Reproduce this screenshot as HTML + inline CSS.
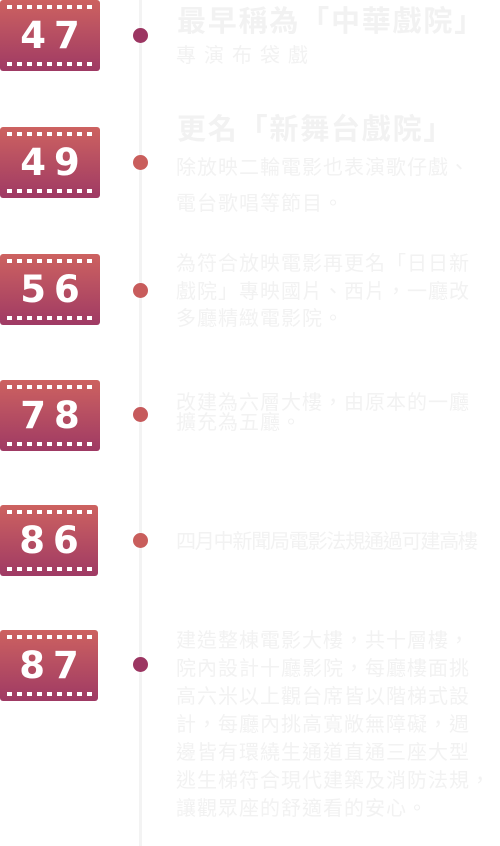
<!DOCTYPE html>
<html><head><meta charset="utf-8"><style>
*{margin:0;padding:0;box-sizing:border-box}
body{width:500px;height:846px;background:#fff;position:relative;overflow:hidden;font-family:"Liberation Sans","Noto Sans CJK TC",sans-serif;color:#f2f2f2}
.line{position:absolute;left:139px;top:0;width:3px;height:846px;background:#f3f3f3}
.b{position:absolute;left:0;width:100px;height:71px;border-radius:3px;background:linear-gradient(#cd6260,#9f3a64);color:#fff;font:bold 37px "DejaVu Sans","Liberation Sans",sans-serif;letter-spacing:8px;text-align:center;line-height:71px;padding-left:8px}
.p{position:absolute;left:7px;width:88px;height:4px;background:repeating-linear-gradient(90deg,#fff 0 5px,transparent 5px 10px)}
.p.t{top:5px}.p.bt{bottom:5px}
.d{position:absolute;left:133px;width:15px;height:15px;border-radius:50%}
.t1{position:absolute;left:177px;font-size:29px;letter-spacing:1.8px;font-weight:bold;white-space:nowrap}
.tx{position:absolute;left:176px;font-size:20px;letter-spacing:1px;line-height:28px;width:300px}
</style></head><body>
<div class="line"></div>
<div class="b" style="top:0"><div class="p t"></div>47<div class="p bt"></div></div>
<div class="b" style="top:127px"><div class="p t"></div>49<div class="p bt"></div></div>
<div class="b" style="top:254px"><div class="p t"></div>56<div class="p bt"></div></div>
<div class="b" style="top:380px"><div class="p t"></div>78<div class="p bt"></div></div>
<div class="b" style="top:505px;width:98px"><div class="p t"></div>86<div class="p bt"></div></div>
<div class="b" style="top:630px;width:98px"><div class="p t"></div>87<div class="p bt"></div></div>
<div class="d" style="top:28px;background:#9c3662"></div>
<div class="d" style="top:155px;background:#c95e5c"></div>
<div class="d" style="top:283px;background:#c85c5c"></div>
<div class="d" style="top:407px;background:#c65a5c"></div>
<div class="d" style="top:533px;background:#c95e5c"></div>
<div class="d" style="top:657px;background:#9c3662"></div>
<div class="t1" style="top:-2px">最早稱為「中華戲院」</div>
<div class="tx" style="top:42px;letter-spacing:8px">專演布袋戲</div>
<div class="t1" style="top:106px">更名「新舞台戲院」</div>
<div class="tx" style="top:150px;line-height:36px">除放映二輪電影也表演歌仔戲、<br>電台歌唱等節目。</div>
<div class="tx" style="top:251px;line-height:27.5px">為符合放映電影再更名「日日新<br>戲院」專映國片、西片，一廳改<br>多廳精緻電影院。</div>
<div class="tx" style="top:393px;line-height:20px">改建為六層大樓，由原本的一廳<br>擴充為五廳。</div>
<div class="tx" style="top:528px;letter-spacing:-1.2px;width:320px">四月中新聞局電影法規通過可建高樓</div>
<div class="tx" style="top:627px;white-space:nowrap">建造整棟電影大樓，共十層樓，<br>院內設計十廳影院，每廳樓面挑<br>高六米以上觀台席皆以階梯式設<br>計，每廳內挑高寬敞無障礙，週<br>邊皆有環繞生通道直通三座大型<br>逃生梯符合現代建築及消防法規，<br>讓觀眾座的舒適看的安心。</div>
</body></html>
